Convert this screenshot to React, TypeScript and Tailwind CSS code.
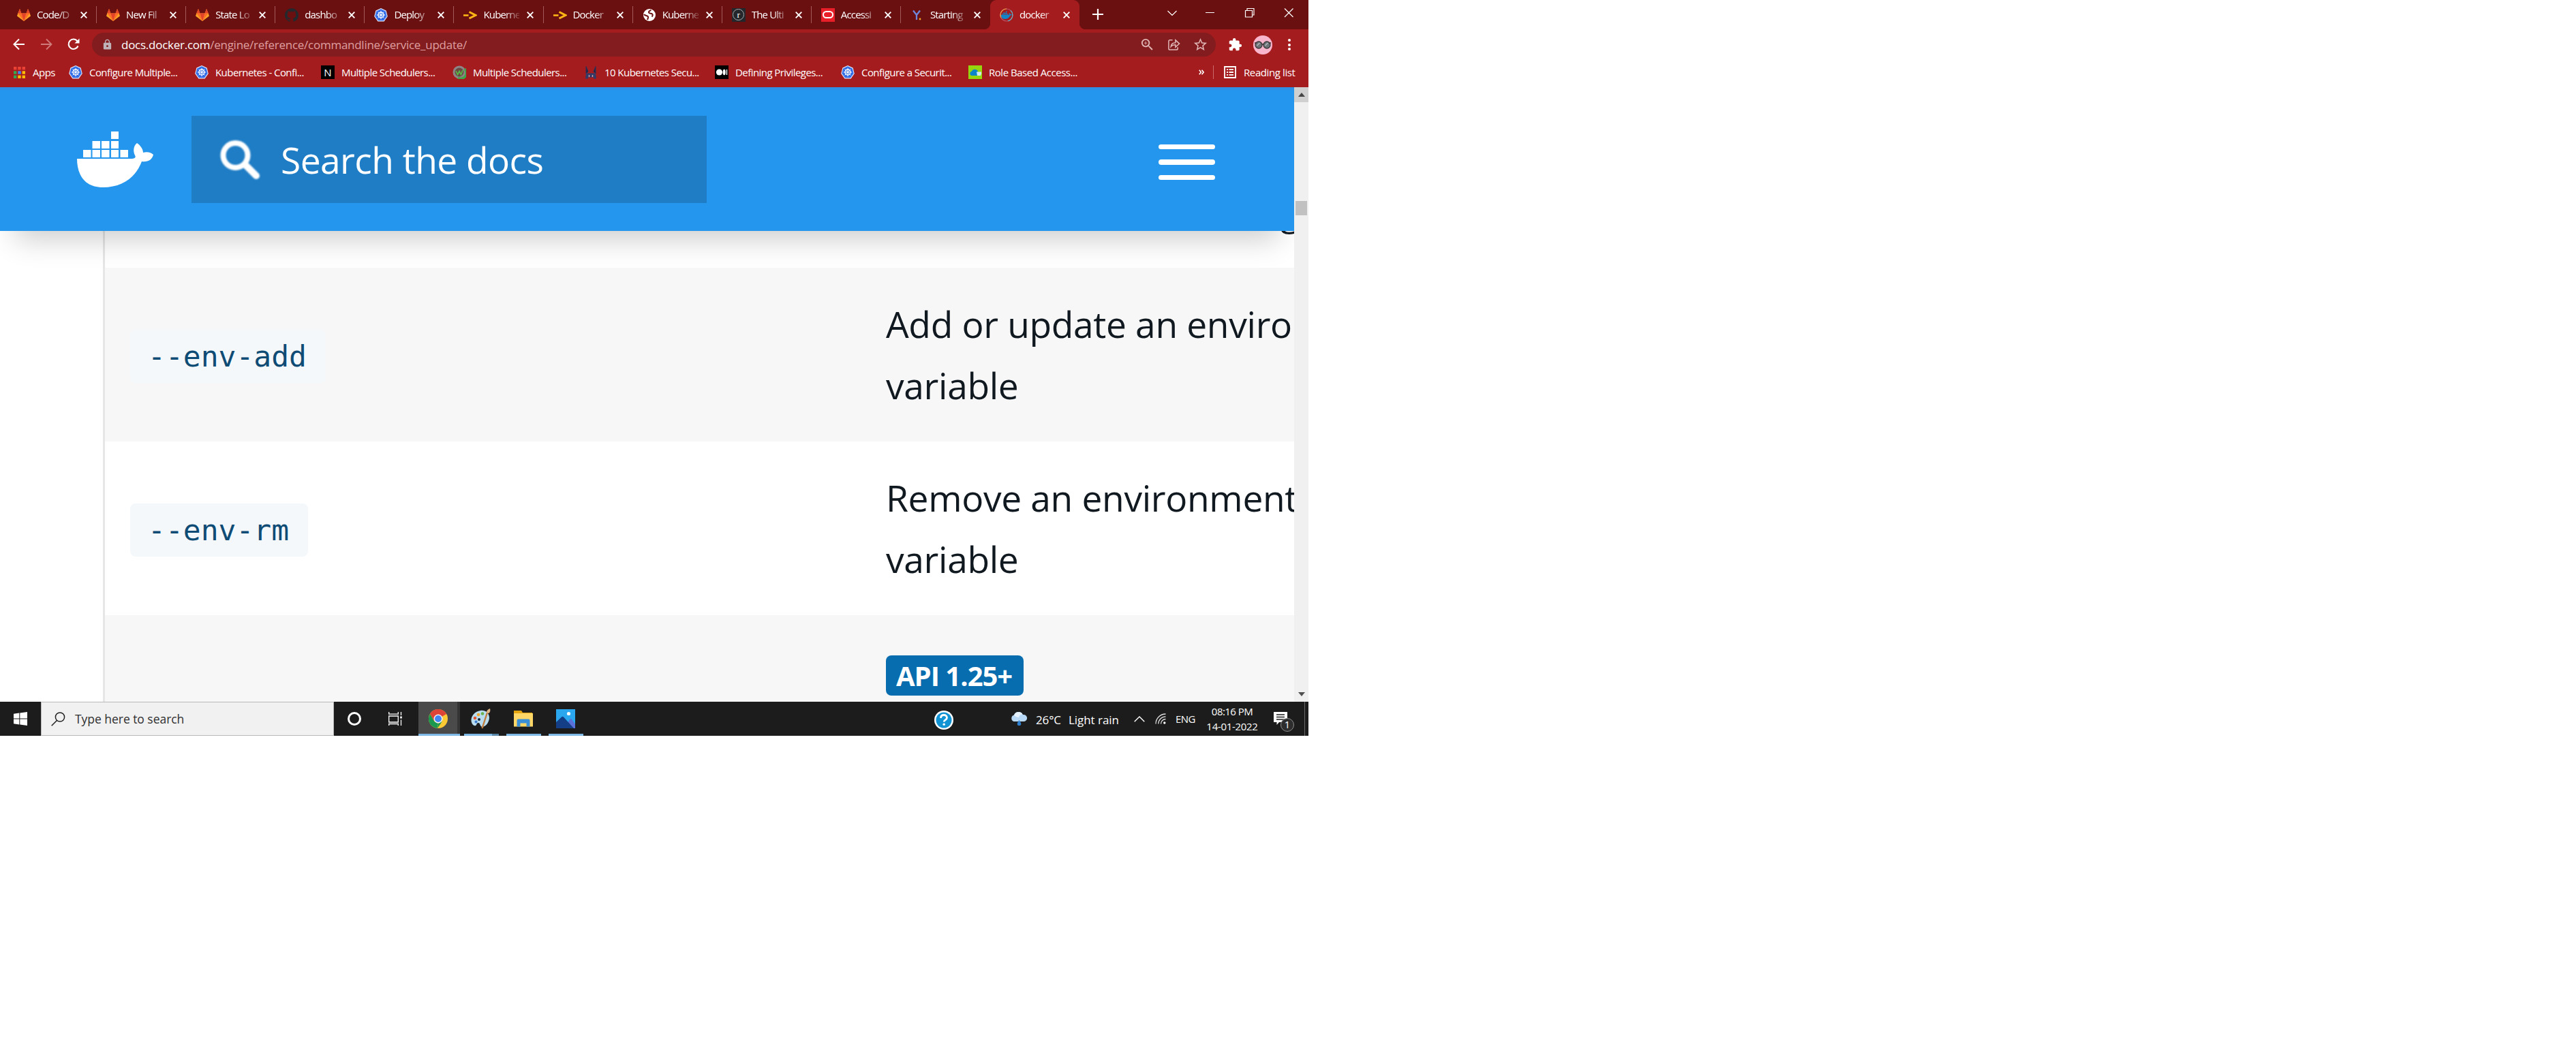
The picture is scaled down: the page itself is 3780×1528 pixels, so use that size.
import React from "react";
import { SiGithub } from "react-icons/si";
import { MdExtension, MdStarBorder, MdLock, MdZoomIn } from "react-icons/md";

const UI = "font-['Open_Sans','Noto_Sans',sans-serif]";

function Gitlab() {
  return (
    <svg viewBox="0 0 20 20" className="h-5 w-5">
      <path d="M10 19 0 11.6 1.3 7.4 4 1l2.4 6.6h7.2L16 1l2.7 6.4L20 11.6z" fill="#fca326" />
      <path d="M10 19 1.3 7.4h5.1L10 19l3.6-11.4h5.1z" fill="#fc6d26" />
      <path d="M10 19 6.4 7.6h7.2zM4 1l2.4 6.6h-5zM16 1l2.7 6.6h-5.1z" fill="#e24329" />
    </svg>
  );
}

function Kube() {
  return (
    <svg viewBox="0 0 20 20" className="h-5 w-5">
      <path d="M10 0 17.6 3.6 19.8 12 14.6 19.4H5.4L.2 12 2.4 3.6z" fill="#dfe6fb" />
      <path d="M10 1.2 16.7 4.4 18.6 11.8 14 18.3H6L1.4 11.8 3.3 4.4z" fill="#326de6" />
      <circle cx="10" cy="10" r="4" fill="none" stroke="#fff" strokeWidth="1.3" />
      <path d="M10 3.8v12.4M3.8 10h12.4M5.6 5.6l8.8 8.8M14.4 5.6l-8.8 8.8" stroke="#fff" strokeWidth=".9" />
    </svg>
  );
}

function Arrow() {
  return (
    <svg viewBox="0 0 20 20" className="h-5 w-5">
      <path d="M0 10.5h7.5" stroke="#fdb515" strokeWidth="2.6" />
      <path d="M8.5 5.5 18 10.3 8.5 15" fill="none" stroke="#fdb515" strokeWidth="3" />
    </svg>
  );
}

function Globe() {
  return (
    <svg viewBox="0 0 20 20" className="h-5 w-5">
      <circle cx="10" cy="10" r="9" fill="#fff" />
      <path d="M12.500 3c-2 .5-3.500 1.500-3.500 3 0 2 3 1.500 5 2.500 1.500 1 .5 3-.5 4" fill="none" stroke="#6b1011" strokeWidth="2" />
      <path d="M2 9c1.500 2.500 5 1.500 6 3.500.7 1.500-.5 3-1 4.500" fill="none" stroke="#6b1011" strokeWidth="2" />
    </svg>
  );
}

function RIcon() {
  return (
    <span className="flex h-5 w-5 items-center justify-center bg-[#23262b]">
      <span className="flex h-[17px] w-[17px] items-center justify-center rounded-full border border-[#aaa] font-['Liberation_Serif',serif] text-[13px] leading-none text-white">r</span>
    </span>
  );
}

function Oracle() {
  return (
    <span className="flex h-5 w-5 items-center justify-center bg-[#e81f28]">
      <span className="h-[11px] w-4 rounded-full border-2 border-white" />
    </span>
  );
}

function YIcon() {
  return (
    <svg viewBox="0 0 20 20" className="h-5 w-5">
      <path d="M4 3.500 9 10v7M14 3.500 9 10" fill="none" stroke="#6f86d8" strokeWidth="2.300" />
      <circle cx="14" cy="16" r="1.400" fill="#f5a623" />
    </svg>
  );
}

function Whale() {
  return (
    <>
      <path d="M50 0h11v11H50zM22.500 14H34v11H22.500zM36 14h11.500v11H36zM50 14h11v11H50zM9 27h11.500v11H9zM22.500 27H34v11H22.500zM36 27h11.500v11H36zM50 27h11v11H50zM63.500 27H75v11H63.500z" />
      <path d="M0 40H77C83 40 86.500 39 85.500 36 81.500 29 83 21 88 17 94 21 97 27 97 31 103 29 109 31 112 34 110 42 104 45 95 44 86 68 66 82 38 82 10 82 0 62 0 40Z" />
    </>
  );
}

function DockerTab() {
  return (
    <svg viewBox="0 0 20 20" className="h-5 w-5">
      <circle cx="10" cy="10" r="9" fill="none" stroke="#b8576f" strokeWidth="1.200" />
      <path d="M2 14A9 9 0 0 1 10 1" fill="none" stroke="#f0a648" strokeWidth="1.200" />
      <path d="M16 3.500A9 9 0 0 1 12 18.800" fill="none" stroke="#58b7c8" strokeWidth="1.200" />
      <g transform="translate(2 4.500) scale(.14)" fill="#1185c8">
        <Whale />
      </g>
    </svg>
  );
}

const tabs: { icon: React.ReactNode; text: string; active?: boolean }[] = [
  { icon: <Gitlab />, text: "Code/D" },
  { icon: <Gitlab />, text: "New Fil" },
  { icon: <Gitlab />, text: "State Lo" },
  { icon: <SiGithub className="h-5 w-5 text-[#24292e]" />, text: "dashbo" },
  { icon: <Kube />, text: "Deploy" },
  { icon: <Arrow />, text: "Kuberne" },
  { icon: <Arrow />, text: "Docker" },
  { icon: <Globe />, text: "Kuberne" },
  { icon: <RIcon />, text: "The Ulti" },
  { icon: <Oracle />, text: "Accessi" },
  { icon: <YIcon />, text: "Starting" },
  { icon: <DockerTab />, text: "docker", active: true },
];

function X({ className = "" }: { className?: string }) {
  return (
    <svg viewBox="0 0 10 10" className={className} fill="none" stroke="#fff" strokeWidth="1.900">
      <path d="m.7.7 8.600 8.600M9.300.7.7 9.300" />
    </svg>
  );
}

function TabStrip() {
  return (
    <div className="flex h-[43px] bg-[#6b1011] pl-[11px]">
      {tabs.map((t, i) => (
        <div
          key={i}
          className={
            t.active
              ? "relative flex h-[43px] w-[131px] shrink-0 items-center rounded-t-[9px] bg-[#a51c1e] pl-[14px]"
              : "relative flex h-[43px] w-[131.100px] shrink-0 items-center pl-[14px]"
          }
        >
          <span className="flex h-5 w-5 shrink-0">{t.icon}</span>
          <span className="-mt-px ml-[9px] w-[53px] shrink-0 text-[15px] tracking-[-0.850px] whitespace-nowrap text-white [mask-image:linear-gradient(to_right,#000_60%,rgba(0,0,0,0.200)_98%)]">
            {t.text}
          </span>
          <X className="ml-[11px] h-[10px] w-[10px] shrink-0" />
          {!t.active && i < 10 && <span className="absolute right-0 h-[25px] w-px bg-[#a45a5b]" />}
          {t.active && (
            <>
              <span className="absolute bottom-0 -left-[9px] h-[9px] w-[9px] bg-[radial-gradient(circle_at_0_0,transparent_9px,#a51c1e_9.500px)]" />
              <span className="absolute -right-[9px] bottom-0 h-[9px] w-[9px] bg-[radial-gradient(circle_at_100%_0,transparent_9px,#a51c1e_9.500px)]" />
            </>
          )}
        </div>
      ))}
      <svg viewBox="0 0 16 16" className="mt-[13px] ml-[19px] h-4 w-4" stroke="#fff" strokeWidth="2.200">
        <path d="M8 0v16M0 8h16" />
      </svg>
      <div className="ml-auto flex pr-[22px]">
        <svg viewBox="0 0 186 43" className="h-[43px] w-[186px]" fill="none" stroke="#fff" strokeWidth="1.200">
          <path d="m1.500 16 6.500 6.500 6.500-6.500M57 18.500h13M115.500 15.500h10v9.500h-10zM118 15.500v-3h10v9.500h-2.500M173 12.500l12.500 12.500M185.500 12.500 173 25" />
        </svg>
      </div>
    </div>
  );
}

function Toolbar() {
  return (
    <div className="flex h-[45px] items-center">
      <svg viewBox="0 0 18 18" className="mb-px ml-[19px] h-[18px] w-[18px]" fill="none" stroke="#fff" strokeWidth="2">
        <path d="M17 9H2M9 1.500 1.500 9 9 16.500" />
      </svg>
      <svg viewBox="0 0 18 18" className="mb-px ml-[22px] h-[18px] w-[18px]" fill="none" stroke="#cf7a7b" strokeWidth="1.800">
        <path d="M1 9h15M9 1.500 16.500 9 9 16.500" />
      </svg>
      <svg viewBox="0 0 18 18" className="mb-px ml-[22px] h-[18px] w-[18px]" fill="none" stroke="#fff" strokeWidth="2.100">
        <path d="M15.500 11.500A7.200 7.200 0 1 1 14.500 4.300" />
        <path d="M17.500.5v7h-7z" fill="#fff" stroke="none" />
      </svg>
      <div className="ml-[18px] flex h-[35px] w-[1649px] items-center rounded-full bg-[#821c1e] pl-[14px]">
        <MdLock className="h-[17px] w-[17px] text-[#bdb3b8]" />
        <span className="ml-[12px] text-[17px] tracking-[-0.260px] whitespace-nowrap text-[#df9fa0]">
          <span className="text-white">docs.docker.com</span>/engine/reference/commandline/service_update/
        </span>
        <div className="ml-auto flex items-center gap-[18px] pr-[11px] text-[#e0b6b6]">
          <MdZoomIn className="h-[23px] w-[23px]" />
          <svg viewBox="0 0 20 20" className="h-[19px] w-[19px]" fill="none" stroke="currentColor" strokeWidth="1.600">
            <path d="M8 3H4a2 2 0 0 0-2 2v11a2 2 0 0 0 2 2h10a2 2 0 0 0 2-2v-2" />
            <path d="M5.500 13c.5-4 3-6 7-6V3l6 5.500-6 5.500v-3.800c-3.500 0-5.500.8-7 2.800z" />
          </svg>
          <MdStarBorder className="h-[23px] w-[23px]" />
        </div>
      </div>
      <MdExtension className="ml-[18px] h-[21px] w-[21px] text-white" />
      <svg viewBox="0 0 28 28" className="ml-[16px] h-7 w-7">
        <circle cx="14" cy="14" r="14" fill="#f8b5cb" />
        <circle cx="8" cy="14" r="5" fill="#6d7478" stroke="#3b3637" strokeWidth="1.300" />
        <circle cx="20" cy="14" r="5" fill="#6d7478" stroke="#3b3637" strokeWidth="1.300" />
        <path d="M2 11h3M23 11h3M12.500 13h3" stroke="#3b3637" strokeWidth="1.300" />
        <path d="m5.500 15 4-4M17.500 15l4-4" stroke="#b5bcbf" strokeWidth="1.400" />
      </svg>
      <span className="ml-[23px] flex flex-col gap-[2.500px]">
        <i className="h-[4px] w-[4px] rounded-full bg-white" />
        <i className="h-[4px] w-[4px] rounded-full bg-white" />
        <i className="h-[4px] w-[4px] rounded-full bg-white" />
      </span>
    </div>
  );
}

function Mark({ icon, text, w, track }: { icon: React.ReactNode; text: string; w: string; track: string }) {
  return (
    <div className={`flex shrink-0 items-center ${w}`}>
      <span className="flex h-5 w-5 shrink-0 items-center justify-center">{icon}</span>
      <span className={`ml-[10px] whitespace-nowrap ${track}`}>{text}</span>
    </div>
  );
}

function Bookmarks() {
  const dots = ["#ea4335", "#ea4335", "#ea4335", "#34a853", "#4285f4", "#fbbc05", "#34a853", "#fbbc05", "#fbbc05"];
  const tk = "tracking-[-0.560px]";
  return (
    <div className="flex h-[40px] items-center pb-[4px] pl-[18px] text-[15px] text-white">
      <Mark
        w="w-[83px]"
        track="tracking-[-0.500px]"
        text="Apps"
        icon={
          <svg viewBox="0 0 17 17" className="h-[17px] w-[17px]">
            {dots.map((c, i) => (
              <rect key={i} x={(i % 3) * 6.3} y={Math.floor(i / 3) * 6.3} width="4.400" height="4.400" fill={c} />
            ))}
          </svg>
        }
      />
      <Mark w="w-[185px]" track={tk} icon={<Kube />} text="Configure Multiple..." />
      <Mark w="w-[185px]" track={tk} icon={<Kube />} text="Kubernetes - Confi..." />
      <Mark
        w="w-[193px]"
        track={tk}
        icon={<span className="flex h-5 w-5 items-center justify-center bg-black text-[15px] leading-none text-white">N</span>}
        text="Multiple Schedulers..."
      />
      <Mark
        w="w-[193px]"
        track={tk}
        icon={
          <svg viewBox="0 0 20 20" className="h-5 w-5">
            <circle cx="10" cy="10" r="8" fill="#6a4a42" stroke="#8d8686" strokeWidth="3" />
            <path d="M18 5a8.500 8.500 0 0 1-10 13.500" fill="none" stroke="#3fa648" strokeWidth="3.400" />
            <path d="m5 8 2.500 5.500 2.500-5 2.500 5 2.500-6.500" fill="none" stroke="#57b947" strokeWidth="1.700" />
          </svg>
        }
        text="Multiple Schedulers..."
      />
      <Mark
        w="w-[192px]"
        track={tk}
        icon={
          <svg viewBox="0 0 20 20" className="h-5 w-5">
            <path d="M3 1.500 6 9 3 12zM17 1.500 14 9l3 3z" fill="#1d2140" stroke="#2c3158" />
            <path d="M3 11.500h14l1 8h-4v-2H6v2H2z" fill="#333a66" />
            <path d="M7.500 14v3M12.500 14v3" stroke="#d8a0a8" strokeWidth="1.400" />
          </svg>
        }
        text="10 Kubernetes Secu..."
      />
      <Mark
        w="w-[185px]"
        track={tk}
        icon={
          <svg viewBox="0 0 20 20" className="h-5 w-5">
            <path d="M0 0h20v20H0z" />
            <circle cx="6.500" cy="10" r="4.600" fill="#fff" />
            <ellipse cx="13.700" cy="10" rx="2" ry="4.300" fill="#fff" />
            <path d="M17.500 6v8" stroke="#fff" strokeWidth="1.400" />
          </svg>
        }
        text="Defining Privileges..."
      />
      <Mark w="w-[187px]" track={tk} icon={<Kube />} text="Configure a Securit..." />
      <Mark
        w="w-[200px]"
        track="tracking-[-0.480px]"
        icon={
          <svg viewBox="0 0 20 20" className="h-5 w-5">
            <path d="M0 0h20v20H0z" fill="#95d60f" />
            <path d="M4.500 15a3.300 3.300 0 0 1 .3-6.300 5 5 0 0 1 9.200 0V15z" fill="#0a86c9" />
            <path d="M12 9.500h7V12l-1 3h-5z" fill="#cfeaf5" />
          </svg>
        }
        text="Role Based Access..."
      />
      <svg viewBox="0 0 8 8" className="ml-auto h-2 w-2" fill="none" stroke="#fff" strokeWidth="1.600">
        <path d="m.8.8 2.600 3.200L.8 7.200M4.500.8 7.100 4 4.500 7.200" />
      </svg>
      <span className="ml-[13px] h-5 w-px bg-[#c96b6c]" />
      <svg viewBox="0 0 18 18" className="ml-[15px] h-[18px] w-[18px]" fill="none" stroke="#fff" strokeWidth="1.800">
        <path d="M1 1h16v16H1zM4 5.200h2M7.500 5.200H14M4 9h2M7.500 9H14M4 12.800h2M7.500 12.800H14" />
      </svg>
      <span className="mr-[17px] ml-[11px] w-[78px] tracking-[-0.400px] whitespace-nowrap">Reading list</span>
    </div>
  );
}

function DocsHeader() {
  return (
    <header className="relative z-10 flex h-[211px] w-[1899px] shrink-0 border-t-[4px] border-[#2f8fe4] bg-[#2496ed] pt-[38px] pl-[113px] shadow-[0_34px_40px_-22px_rgba(0,0,0,0.200)]">
      <svg viewBox="0 0 112 82" className="mt-[23px] h-[82px] w-[112px]" fill="#fff">
        <Whale />
      </svg>
      <div className="ml-[56px] flex h-[128px] w-[756px] items-center bg-[#1f7dc5] pl-[42px]">
        <svg viewBox="0 0 58 58" className="h-[58px] w-[58px] blur-[1px]" fill="none" stroke="#fff">
          <circle cx="22.500" cy="23" r="18" strokeWidth="8" />
          <path d="m37 37 16 16" strokeWidth="10" strokeLinecap="round" />
        </svg>
        <span className="mt-[2px] ml-[31px] text-[53.300px] leading-none tracking-[-0.550px] whitespace-nowrap text-white">Search the docs</span>
      </div>
      <div className="mt-[42px] ml-[663px] flex flex-col">
        <span className="h-[7px] w-[83px] rounded-[4px] bg-white" />
        <span className="mt-[15px] h-[8px] w-[83px] rounded-[4px] bg-white" />
        <span className="mt-[15px] h-[7px] w-[83px] rounded-[4px] bg-white" />
      </div>
    </header>
  );
}

function Row({ flag, children, className }: { flag?: string; children: React.ReactNode; className: string }) {
  return (
    <div className={`flex h-[255px] w-[1745px] shrink-0 overflow-hidden ${className}`}>
      <div className="flex w-[1146px] shrink-0 items-center pt-[5px] pl-[37px]">
        {flag && (
          <code className="flex h-[78px] items-center rounded-[8px] bg-[#f4f8fb] pr-[28px] pl-[26px] font-['DejaVu_Sans_Mono',monospace] text-[43px] leading-none text-[#0f4c75]">
            {flag}
          </code>
        )}
      </div>
      <div className="shrink-0 text-[53.300px] leading-[90px] tracking-[-0.330px] whitespace-nowrap text-[#101820]">{children}</div>
    </div>
  );
}

function Page() {
  return (
    <div className="flex h-[902px] w-[1920px] bg-white">
      <main className="flex w-[1899px] flex-col overflow-hidden">
        <DocsHeader />
        <div className="ml-[151px] flex h-[691px] flex-col overflow-hidden border-l-[3px] border-[#e6e6e6]">
          <div className="flex h-[54px] shrink-0 justify-end overflow-hidden bg-white">
            <span className="-mt-[73px] -mr-[9px] text-[53.300px] leading-[90px] text-[#101820]">g</span>
          </div>
          <Row flag="--env-add" className="bg-[#f7f7f7]">
            <p className="mt-[38px]">Add or update an enviro</p>
            <p>variable</p>
          </Row>
          <Row flag="--env-rm" className="bg-white">
            <p className="mt-[38px]">Remove an environment</p>
            <p>variable</p>
          </Row>
          <Row className="bg-[#f7f7f7]">
            <span className="mt-[59px] flex h-[59px] w-[202px] items-center rounded-[8px] bg-[#086dae] pt-px pl-[15px] text-[40px] leading-none font-bold tracking-[-1px] text-white">
              API 1.25+
            </span>
          </Row>
        </div>
      </main>
      <div className="flex w-[21px] flex-col items-center bg-[#f0f0f0]">
        <div className="flex h-[22px] w-full items-center justify-center bg-[#d0d0d0]">
          <svg viewBox="0 0 10 6" className="h-[6px] w-[10px]" fill="#454545">
            <path d="M0 6 5 0l5 6z" />
          </svg>
        </div>
        <div className="mt-[145px] h-[21px] w-[17px] bg-[#c1c1c1]" />
        <svg viewBox="0 0 10 6" className="mt-auto mb-[8px] h-[6px] w-[10px]" fill="#505050">
          <path d="M0 0h10L5 6z" />
        </svg>
      </div>
    </div>
  );
}

function Taskbar() {
  return (
    <footer className="flex h-[50px] w-[1920px] items-center bg-[#1c1c1c] text-white">
      <div className="flex w-[60px] justify-center">
        <svg viewBox="0 0 20 20" className="h-5 w-5" fill="#fff">
          <path d="m0 2.800 8.300-1.200v8H0zM9.300 1.500 20 0v9.500H9.300zM0 10.500h8.300v8L0 17.300zM9.300 10.500H20V20L9.300 18.500z" />
        </svg>
      </div>
      <div className="flex h-[50px] w-[430px] items-center border border-[#b9b9b9] bg-[#f1f1f1] pl-[14px]">
        <svg viewBox="0 0 21 21" className="h-[21px] w-[21px]" fill="none" stroke="#222" strokeWidth="1.500">
          <circle cx="13" cy="7.500" r="6.600" />
          <path d="M8.500 12.500.7 20.300" />
        </svg>
        <span className="ml-[14px] text-[17.500px] tracking-[-0.040px] text-[#303030]">Type here to search</span>
      </div>
      <div className="flex w-[60px] justify-center">
        <span className="h-5 w-5 rounded-full border-[3px] border-white" />
      </div>
      <svg viewBox="0 0 20 20" className="ml-[20px] h-5 w-5" fill="none" stroke="#fff" strokeWidth="1.300">
        <path d="M.7 6h13.600v9H.7zM.7 0v3.200h13.600V0M.7 20v-2.500h13.600V20M18.500 0v5M18.500 11.500V20" />
        <path d="M17.200 6.500h2.600v3h-2.600z" fill="#fff" stroke="none" />
      </svg>
      <div className="ml-[24px] flex h-[50px] w-[61px] flex-col items-center justify-between border-r-[4px] border-[#353535] bg-[#4a4a4a] pt-[11px]">
        <svg viewBox="0 0 28 28" className="h-7 w-7">
          <circle cx="14" cy="14" r="14" fill="#fbc934" />
          <path d="M14 14 1.900 7A14 14 0 0 1 26.100 7z" fill="#db4437" />
          <path d="M14 7h12.100A14 14 0 0 0 1.900 7L8 17.500z" fill="#db4437" />
          <path d="M1.900 7 8 17.500 14 21l-1.500 7A14 14 0 0 1 1.900 7z" fill="#1a9850" />
          <path d="m20 17.500-7 10.500 1-7z" fill="#1a9850" />
          <circle cx="14" cy="14" r="6.500" fill="#f4f4f4" />
          <circle cx="14" cy="14" r="5" fill="#4285f4" />
        </svg>
        <i className="h-[3px] w-[61px] shrink-0 translate-x-[2px] bg-[#7fb9e6]" />
      </div>
      <div className="ml-[6px] flex h-[50px] w-[51px] flex-col items-center justify-between pt-[10px]">
        <svg viewBox="0 0 30 30" className="mr-[3px] h-[30px] w-[30px]">
          <path d="M15 3C7 4 1 11 1.500 18c.5 5 4 8 6.500 7 2-1 1-4 4-4 3 0 2 6 6 6 6-1 10-8 10-14C27.500 6 22 2 15 3z" fill="#b9dcee" />
          <circle cx="7" cy="14" r="2.300" fill="#e4572e" />
          <circle cx="12" cy="9" r="2.300" fill="#f0a830" />
          <circle cx="18" cy="7.500" r="2.300" fill="#69b34c" />
          <circle cx="8.500" cy="19.500" r="2" fill="#3a7bd0" />
          <circle cx="13" cy="16" r="2" fill="#1c2b3a" />
          <path d="M26 3 17.500 29" stroke="#c07d3d" strokeWidth="2.400" />
          <path d="M24 6c0-3 2-5 5-6 1 3 0 6-2 7z" fill="#e0b887" />
        </svg>
        <i className="flex h-[3px] w-[51px] bg-[#7fb9e6]">
          <i className="ml-auto w-[10px] bg-[#5a86a8]" />
        </i>
      </div>
      <div className="ml-[11px] flex h-[50px] w-[51px] flex-col items-center justify-between pt-[13px]">
        <svg viewBox="0 0 28 24" className="mr-[2px] h-6 w-7">
          <path d="M0 0h11l2 3h14v20H0z" fill="#e5a50f" />
          <path d="M0 4h28v19.500H0z" fill="#ffd766" />
          <path d="M4.500 23.500V14.500a2 2 0 0 1 2-2h15a2 2 0 0 1 2 2v9h-5v-5h-9v5z" fill="#3a8fd6" />
        </svg>
        <i className="h-[3px] w-[51px] bg-[#7fb9e6]" />
      </div>
      <div className="ml-[11px] flex h-[50px] w-[51px] flex-col items-center justify-between pt-[11px]">
        <svg viewBox="0 0 28 28" className="mr-[2px] h-7 w-7">
          <path d="M0 0h28v28H0z" fill="#2aa7ee" />
          <path d="M12 28 20 15c1-1.500 2-1.500 3 0l5 7v6z" fill="#5a6fd8" />
          <path d="M0 19 8 11.500c1-1 2-1 3 0L26 28H0z" fill="#143f86" />
          <circle cx="18.500" cy="6.500" r="2.600" fill="#fff" />
        </svg>
        <i className="h-[3px] w-[51px] bg-[#7fb9e6]" />
      </div>
      <svg viewBox="0 0 28 28" className="mt-[3px] ml-[515px] h-7 w-7">
        <circle cx="14" cy="14" r="14" fill="#fff" />
        <circle cx="14" cy="14" r="11.500" fill="#1193d4" />
        <path d="M9.500 11c0-3 2-4.500 4.500-4.500s4.500 1.500 4.500 4c0 3-4.300 3.200-4.300 6" fill="none" stroke="#fff" strokeWidth="2.800" />
        <circle cx="14.200" cy="20.300" r="1.800" fill="#fff" />
      </svg>
      <svg viewBox="0 0 26 20" className="ml-[83px] h-5 w-[26px]">
        <path d="M5.500 14a5 5 0 0 1 .5-9.500 7 7 0 0 1 13-.5 5 5 0 0 1 2 10z" fill="#b7d9f5" />
        <path d="M6 5a7 7 0 0 1 12.500-1.500c-3 0-5 2-5.500 4.500-2 0-5-1-7-3z" fill="#e6f2fd" />
        <path d="M13.500 12c2 3 2.800 4 2.800 5.500a2.800 2.800 0 0 1-5.600 0c0-1.500.8-2.500 2.800-5.500z" fill="#2f7fd0" />
      </svg>
      <span className="mt-[3px] ml-[12px] w-[48px] text-[17px] tracking-[-0.150px]">26°C</span>
      <span className="mt-[3px] w-[96px] text-[17px] tracking-[-0.050px] whitespace-nowrap">Light rain</span>
      <svg viewBox="0 0 16 9" className="h-[9px] w-4" fill="none" stroke="#fff" strokeWidth="1.400">
        <path d="m.7 8.300L8 1l7.300 7.300" />
      </svg>
      <svg viewBox="0 0 16 16" className="ml-[15px] h-4 w-4" fill="none" stroke="#ddd" strokeWidth="1.300">
        <path d="M1 15.500A14.500 14.500 0 0 1 15.500 1M4.800 15.500A10.700 10.700 0 0 1 15.500 4.800M8.500 15.500a7 7 0 0 1 7-7" />
        <circle cx="13.800" cy="14" r="1.700" fill="#fff" stroke="none" />
      </svg>
      <span className="ml-[14px] w-[41px] text-[15px] tracking-[-0.600px]">ENG</span>
      <div className="flex w-[84px] flex-col items-center text-[15px] leading-[22px] tracking-[-0.300px] whitespace-nowrap">
        <span className="tracking-[-0.550px]">08:16 PM</span>
        <span>14-01-2022</span>
      </div>
      <div className="relative ml-[19px] h-[50px] w-[32px]">
        <svg viewBox="0 0 20 20" className="mt-[15px] h-5 w-5">
          <path d="M0 0h20v15H8l-3.500 4V15H0z" fill="#fff" />
          <path d="M4 4h12M4 7.500h12M4 11h12" stroke="#1c1c1c" strokeWidth="1.300" />
        </svg>
        <span className="absolute top-[24px] left-[10px] flex h-[20px] w-[20px] items-center justify-center rounded-full border border-[#8d8d8d] bg-[#2d2d2d] text-[14.500px] leading-none">
          1
        </span>
      </div>
      <i className="ml-auto h-[50px] w-px bg-[#6a6a6a]" />
      <i className="w-[5px]" />
    </footer>
  );
}

export default function App() {
  return (
    <div className={`h-[1528px] w-[3780px] overflow-hidden bg-white ${UI}`}>
      <div className="flex w-[1920px] flex-col">
        <div className="flex h-[128px] flex-col bg-[#a51c1e]">
          <TabStrip />
          <Toolbar />
          <Bookmarks />
        </div>
        <Page />
        <Taskbar />
      </div>
    </div>
  );
}
